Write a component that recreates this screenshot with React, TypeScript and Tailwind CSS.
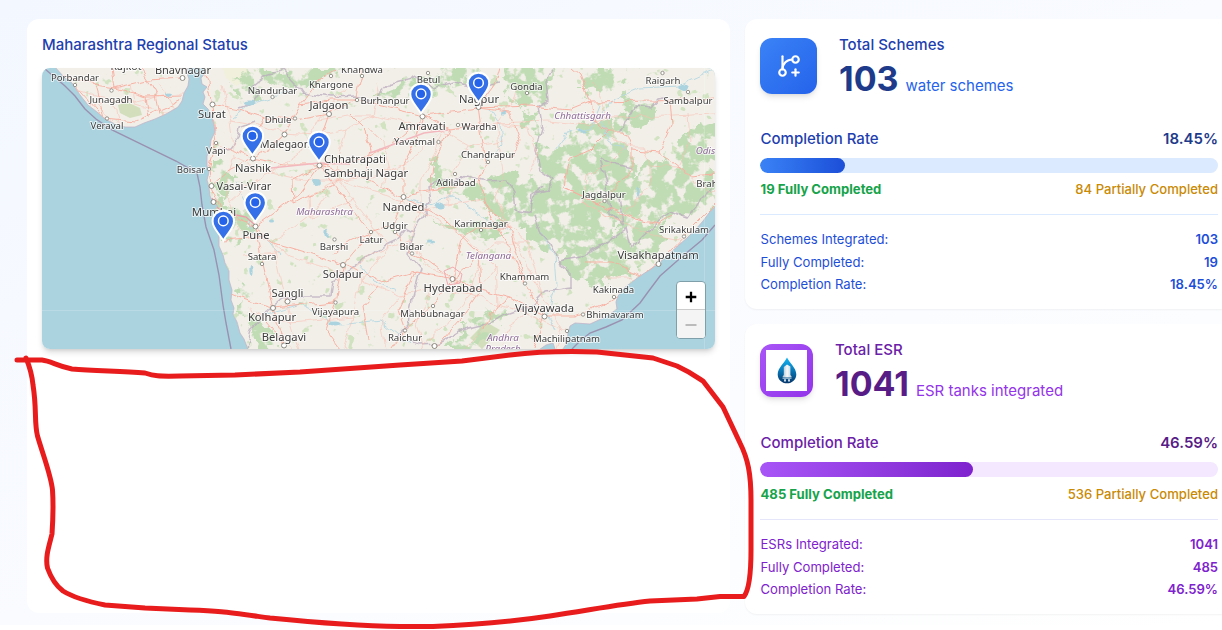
import { GitBranchPlus } from "lucide-react";

type Pt = [number, number];

const LAND =
  "M54 66L64 77L72 83L80 95L88 105L97 112L105 119L115 124L125 127L135 127L144 123L155 119L166 114L178 107L182 101L184 93L188 86L189 79L187 73L188 66Z" +
  "M203 66L206 72L201 78L202 84L207 87L203 92L205 97L203 104L208 109L212 116L214 125L215 132L211 140L210 149L207 156L207 166L209 172L207 180L209 188L210 196L213 202L218 206L214 210L216 222L219 233L219 246L223 255L225 263L229 271L229 280L232 290L231 300L234 308L233 314L237 322L240 333L244 339L249 352L536 352L546 345L553 343L556 352L561 352L567 343L568 333L570 326L575 323L590 324L601 319L610 314L617 309L616 302L618 296L624 288L640 276L651 269L658 264L670 253L680 244L687 238L696 229L703 221L709 213L718 203L718 66Z";

const FOREST = [
  "M500 66L554 66L551 92L543 110L531 102L520 108L508 95Z",
  "M524 112L541 118L538 132L525 128Z",
  "M536 142L556 150L571 134L590 122L612 120L620 140L630 158L640 190L622 214L600 250L590 262L570 258L560 240L545 220L525 215L500 222L482 200L480 185L500 172L525 176L542 172L536 155Z",
  "M616 112L629 120L628 155L618 150Z",
  "M580 80L594 70L628 68L626 82L600 92L580 94Z",
  "M624 92L650 102L658 118L640 128L625 115Z",
  "M676 148L690 130L718 122L718 200L696 216L672 214L650 235L630 246L618 240L620 210L640 170L662 158Z",
  "M482 182L545 186L560 222L572 246L552 255L535 246L520 228L500 218L486 204Z",
  "M560 262L590 240L620 234L652 232L670 238L650 262L620 276L596 284L575 278Z",
  "M448 344L464 330L474 314L492 311L505 306L500 325L486 338L470 349L446 349Z",
  "M232 78L256 74L260 98L240 104Z",
  "M256 72L300 68L345 68L305 92L280 92L262 82Z",
  "M372 99L392 90L410 78L440 68L478 68L470 82L438 90L420 94L400 102Z",
  "M430 158L444 168L456 184L478 182L490 192L480 200L456 194L440 190L430 178Z",
  "M214 160L230 168L234 182L224 202L214 196Z",
  "M210 200L234 206L256 216L250 236L238 246L228 244L222 228Z",
  "M240 280L250 288L252 316L270 326L280 349L262 349L250 330L238 306Z",
  "M432 218L460 228L500 222L510 234L490 238L450 234Z",
];

const ROADS = [
  "M60 75L95 85L115 88L148 80L183 78M95 85L104 118L135 121L182 100M115 88L112 68M115 88L145 97L182 96M148 80L140 68M145 97L148 117M104 118L75 85M148 80L156 95L160 115",
  "M204 70L212 105L216 143L209 169L211 187L222 214L255 227M212 105L240 110L266 118L295 120L329 114L356 100L424 116L478 108M216 143L232 150L253 158M211 187L230 170L253 158L280 140L284 134L300 105L320 80L335 68",
  "M255 227L263 264L273 308L284 345M255 227L272 242L315 255L343 265L383 281L415 272L453 279M343 265L335 302L326 330L340 349M453 279L433 305L405 330L392 349M453 279L480 290L510 298L544 316L575 316L612 301L658 264L685 235L715 205",
  "M319 165L335 185L371 232L343 265M319 165L298 195L273 214L255 227M319 165L370 180L403 197L445 220L478 252L480 290M253 158L285 165L319 165L355 162L390 146L424 116M329 114L320 140L319 165",
  "M478 108L481 130L486 162L478 182L486 204L510 230L525 283L544 316M478 108L530 106L570 110L590 102L655 101L715 98M590 102L595 122L608 132L625 132L632 150L632 170L600 205L564 188M478 108L495 85L500 68M478 108L510 112L520 140L510 160M590 102L580 75L572 68",
  "M424 116L450 130L485 125M403 197L430 190L465 184M403 197L392 225L371 232L350 242L333 255M403 197L403 165L417 138L424 116M350 113L365 128L371 150L365 170M266 118L255 135M300 105L330 100L356 100M356 100L362 76L360 68",
  "M415 272L398 310L405 330M383 281L363 305L369 340M225 240L248 238L266 236M230 294L245 300L273 308L335 302M262 318L284 345M410 252L428 260L453 279L470 265L478 252M410 252L392 225M453 279L462 240L478 228L512 228",
  "M480 290L460 320L434 349M510 298L490 312L484 330M525 283L510 250L486 204M564 188L568 160L590 150L608 132M564 188L600 205L635 220L658 225L672 215M632 150L660 152L690 176L715 174M660 152L672 126L670 98M544 316L538 335L534 349M640 276L612 262L585 262M293 202L308 196L335 185M293 202L292 180L319 165M430 190L434 160L450 130",
];

const BORDERS = [
  "M240 108L252 104L260 92L253 84L263 76L283 70L296 84L302 93L330 97L356 96L374 101L390 83L412 77L432 88L455 82L478 88L500 83",
  "M254 122L240 128L238 138L230 148L220 150",
  "M553 68L546 82L548 100L538 106L542 130L536 150L540 170L554 180L548 190L536 193L530 205",
  "M247 349L251 329L265 314L283 299L296 296L331 296L333 280L347 272L362 260L372 256L384 246L397 240L406 229L414 233L424 216L430 202L428 188L444 178L453 182L465 176L486 181L508 180L514 190L516 210",
  "M414 233L408 254L420 268L415 286L410 307L408 325L397 337L418 345L439 344L462 330L486 324L507 315L530 307L545 292L570 288L570 270L558 261L551 244L539 232L534 216",
  "M516 210L530 213L532 194L545 186M600 157L615 164L633 168M620 132L634 106L650 108L658 99L668 97M600 157L607 185L610 213L623 224L619 198M558 261L580 257L600 246L626 228L631 248L642 236L670 212L687 218L700 200L712 188L715 182",
];

const RIVERS = [
  "M290 90L270 98L250 105L232 118",
  "M490 110L500 125L502 145L486 160",
  "M600 105L590 130L568 132L555 150",
  "M540 232L554 255L556 285L547 312L556 332",
  "M400 196L428 206L452 196L470 208L510 232",
  "M262 316L300 305L340 325L380 320L410 345",
  "M625 150L610 140L600 118L615 98L640 88L680 86L715 70",
  "M235 180L248 205L250 232L266 238L280 255",
  "M360 265L372 280L395 290",
];

const LAKES: [number, number, number, number][] = [
  [249, 103, 5, 2.4], [316, 182, 4, 3], [253, 212, 2.4, 1.6], [272, 221, 3, 1.6], [335, 323, 5.6, 2.4],
  [440, 206, 5.6, 2.4], [431, 242, 3, 1.6], [505, 113, 3, 1.6], [582, 132, 4, 1.6], [683, 87, 5.6, 3],
  [638, 192, 1.6, 5.6], [167, 94, 3, 1.6], [251, 270, 1.6, 5], [327, 233, 1.6, 4],
];

type Label = [string, number, number, number];
const LABELS: Label[] = [
  ["Rajkot", 126, 70, 10.5], ["Bhavnagar", 183, 74, 11], ["Porbandar", 75, 81, 9.6],
  ["Junagadh", 111, 102.5, 9.6], ["Veraval", 107, 128.5, 9.6], ["Surat", 212, 118, 11.2],
  ["Vapi", 216, 153.5, 9.6], ["Boisar", 191, 172.5, 9.6], ["Nandurbar", 272.5, 94, 9.6],
  ["Dhule", 278, 122.5, 9.6], ["Malegaon", 285, 147.5, 10.8], ["Khandwa", 362, 73, 9.6],
  ["Khargone", 331, 87.5, 9.6], ["Jalgaon", 329, 109, 11.2], ["Burhanpur", 385, 103.5, 9.6],
  ["Betul", 428.5, 83, 9.6], ["Nagpur", 479, 102.5, 11.2], ["Gondia", 526.5, 89.5, 9.6],
  ["Raigarh", 663, 84, 9.6], ["Sambalpur", 688, 103.5, 9.6], ["Amravati", 422, 130, 11.2],
  ["Wardha", 479, 129.5, 9.6], ["Yavatmal", 414.5, 145, 9.6], ["Chandrapur", 488, 158, 9.6],
  ["Nashik", 253, 171.5, 11.2], ["Chhatrapati", 355, 162.5, 11.2], ["Sambhaji Nagar", 366, 177, 11.2],
  ["Adilabad", 456, 185.5, 9.6], ["Jagdalpur", 604, 197.5, 9.6], ["Brahmapur", 722, 187, 9.6],
  ["Vasai-Virar", 244, 189.5, 11], ["Mumbai", 214, 216, 11.4], ["Pune", 256, 239, 11.2],
  ["Satara", 262, 260, 9.6], ["Nanded", 403.5, 210.5, 11.2], ["Udgir", 395, 228.5, 9.6],
  ["Karimnagar", 481, 226.5, 9.6], ["Latur", 371.5, 242.5, 9.6], ["Barshi", 334, 250, 9.6],
  ["Bidar", 411.5, 250, 9.6], ["Solapur", 343, 278, 11.2], ["Hyderabad", 453, 292, 11.4],
  ["Khammam", 524.5, 280, 9.6], ["Sangli", 287.5, 296.5, 11.2], ["Kolhapur", 272, 321, 11.2],
  ["Vijayapura", 335.5, 315, 9.6], ["Mahbubnagar", 432.5, 317, 9.6], ["Belagavi", 284, 341, 11.2],
  ["Raichur", 405, 341, 9.6], ["Machilipatnam", 566.5, 342, 9.6], ["Vijayawada", 544.5, 311.5, 11.2],
  ["Bhimavaram", 615, 318, 9.6], ["Kakinada", 613.5, 293, 9.6], ["Visakhapatnam", 658, 259, 11.2],
  ["Srikakulam", 684, 233, 9.6],
];

const REGIONS: Label[] = [
  ["Maharashtra", 324.5, 215, 9.8], ["Chhattisgarh", 582.5, 118.5, 9.8], ["Odisha", 711, 153.5, 9.8],
  ["Telangana", 488.5, 258.5, 9.8], ["Andhra", 503, 341, 9.8], ["Pradesh", 503, 352, 9.8],
];

const TOWNS: Pt[] = [
  [75, 85], [111.5, 90.5], [107, 118.5], [216, 143], [209, 169], [272.5, 97], [295, 118.5], [331, 76],
  [362, 76], [357, 100], [428, 73], [527, 93], [662.5, 73], [688, 92], [458, 125], [438.5, 142],
  [488, 162], [455, 174], [604.5, 201], [262, 264], [395, 232], [371, 232], [334.5, 239.5], [481, 230],
  [412, 253.5], [525, 283.5], [335.5, 302.5], [433, 306], [405, 330.5], [567, 331], [583, 314.5],
  [614, 297], [684, 236.5],
];

const CITIES: Pt[] = [
  [182.5, 78], [212.5, 104.5], [329, 114], [422.5, 116.5], [478.5, 107], [284.5, 134.5], [253, 158.5],
  [319.5, 165.5], [403.5, 197], [211.5, 186], [213.5, 202], [255.5, 226.5], [343, 265], [452.5, 279],
  [273, 308], [287.5, 301.5], [284, 345.5], [544.5, 316.5], [658.5, 264], [434.5, 346],
];

const PINS: Pt[] = [
  [478.5, 72.5], [421, 83.5], [252.4, 125.5], [319, 131.5], [255.2, 192], [223.3, 210.5],
];

function RegionMap() {
  return (
    <svg viewBox="42 68 673 281" className="block h-full w-full font-['Noto_Sans',sans-serif]">
      <defs>
        <clipPath id="land"><path d={LAND} /></clipPath>
        <filter id="patches" x="0" y="0" width="100%" height="100%">
          <feTurbulence type="fractalNoise" baseFrequency="0.075" numOctaves="4" seed="8" result="n" />
          <feColorMatrix in="n" type="matrix" values="0 0 0 0 0  0 0 0 0 0  0 0 0 0 0  9 0 0 0 -3.5" result="m" />
          <feDisplacementMap in="SourceGraphic" in2="n" scale="22" xChannelSelector="G" yChannelSelector="B" result="d" />
          <feComposite in="d" in2="m" operator="in" />
        </filter>
        <filter id="scatter" x="0" y="0" width="100%" height="100%">
          <feTurbulence type="fractalNoise" baseFrequency="0.09" numOctaves="3" seed="21" result="n" />
          <feColorMatrix in="n" type="matrix" values="0 0 0 0 0  0 0 0 0 0  0 0 0 0 0  14 0 0 0 -9.6" result="m" />
          <feComposite in="SourceGraphic" in2="m" operator="in" />
        </filter>
        <filter id="wobble" x="0" y="0" width="100%" height="100%">
          <feTurbulence type="fractalNoise" baseFrequency="0.08" numOctaves="2" seed="5" result="n" />
          <feDisplacementMap in="SourceGraphic" in2="n" scale="8" xChannelSelector="R" yChannelSelector="G" />
        </filter>
      </defs>
      <rect x="41" y="67" width="675" height="283" fill="#aad3df" />
      <path d={LAND} fill="#f2efe9" stroke="#c3b5c8" strokeWidth="0.8" />
      <g clipPath="url(#land)">
        <g filter="url(#scatter)" opacity="0.8">
          <rect x="42" y="68" width="673" height="281" fill="#c8e0b6" />
        </g>
        <path d="M118 105L127 102L140 108L142 115L130 118L120 113Z" fill="#d3dfbc" />
        <path d="M222 66L246 66L248 80L236 86L226 78Z" fill="#f0f0dc" />
        <path d="M470 338L486 322L500 330L482 349Z" fill="#d3dfbc" />
        <g filter="url(#patches)" fill="#c0dcb4">
          <rect x="42" y="68" width="1" height="1" opacity="0" />
          <rect x="714" y="348" width="1" height="1" opacity="0" />
          {FOREST.map((d) => <path key={d} d={d} />)}
        </g>
        <g filter="url(#wobble)" fill="none">
          {RIVERS.map((d) => <path key={d} d={d} stroke="#b4d8e2" strokeWidth="0.9" />)}
          {BORDERS.map((d) => <path key={d} d={d} stroke="#baabbd" strokeWidth="1.5" strokeOpacity="0.75" />)}
          {ROADS.map((d) => <path key={d} d={d} stroke="#f8ae9f" strokeWidth="1" strokeOpacity="0.95" />)}
          {ROADS.map((d) => (
            <path key={d} d={d} transform="translate(18 15)" stroke="#f9bcae" strokeWidth="0.8" strokeOpacity="0.7" />
          ))}
          {LAKES.map(([x, y, rx, ry]) => (
            <ellipse key={`${x}-${y}`} cx={x} cy={y} rx={rx} ry={ry} fill="#aad3df" />
          ))}
        </g>
        <path d="M271 168L319 163L350 164M370 153L424 133L448 130" fill="none" stroke="#f2b8bd" strokeWidth="1.7" />
        <path d="M444 271L453 267L462 274L460 283L448 285Z" fill="none" stroke="#f0a9b0" />
        <path d="M212 198L218 208L226 213M222 212L246 217L255 225" fill="none" stroke="#ee9aa8" strokeWidth="1.3" />
      </g>
      <path
        d="M45 69L65 86L75 96L85 109L96 119L112 130L176 161L197 173L200 187L202 205L206 227L214 250L219 275L223 305L226 323L231 349M715 225L702 240L690 250L677 261L660 276L648 292L640 303L622 320L606 327L590 333L581 340L572 349"
        fill="none"
        stroke="#9a91b0"
        strokeWidth="1.4"
      />
      <path d="M42 310.5H715M704.5 68V349" stroke="#fff" strokeOpacity="0.28" strokeWidth="0.7" />
      {TOWNS.map(([x, y]) => (
        <circle key={`${x}-${y}`} cx={x} cy={y} r="1.7" fill="#fff" stroke="#8b8980" strokeWidth="0.9" />
      ))}
      {CITIES.map(([x, y]) => (
        <circle key={`${x}-${y}`} cx={x} cy={y} r="2.5" fill="#fff" stroke="#8b8980" strokeWidth="1" />
      ))}
      <g textAnchor="middle" stroke="#fff" strokeOpacity="0.7" strokeWidth="2" strokeLinejoin="round" paintOrder="stroke">
        {REGIONS.map(([t, x, y, s]) => (
          <text key={t} x={x} y={y} fontSize={s} fill="#8d6a98" fontStyle="italic">{t}</text>
        ))}
        {LABELS.map(([t, x, y, s]) => (
          <text key={t} x={x} y={y} fontSize={s} fill="#3c3c3c">{t}</text>
        ))}
      </g>
      {PINS.map(([x, y]) => (
        <g key={`${x}-${y}`} transform={`translate(${x} ${y})`}>
          <path
            d="M0 0.3C-6 0.3 -10.7 4.8 -10.7 10.7C-10.7 17.5 -5.5 21 0 30C5.5 21 10.7 17.5 10.7 10.7C10.7 4.8 6 0.3 0 0.3Z"
            fill="#3670e8"
            stroke="#fff"
            strokeWidth="2"
          />
          <circle cy="10.4" r="4.8" fill="#2563eb" stroke="#fff" strokeWidth="1.5" />
        </g>
      ))}
    </svg>
  );
}

function DropLogo() {
  return (
    <svg viewBox="0 0 20 27" className="h-[27px] w-[20px]">
      <defs>
        <linearGradient id="drop" x1="0" y1="0" x2="0" y2="1">
          <stop offset="0" stopColor="#12b5f5" />
          <stop offset="0.5" stopColor="#0879b8" />
          <stop offset="1" stopColor="#06366b" />
        </linearGradient>
        <linearGradient id="tank" x1="0" y1="0" x2="1" y2="0">
          <stop offset="0" stopColor="#a9bfcc" />
          <stop offset="0.5" stopColor="#f4f8fa" />
          <stop offset="1" stopColor="#c4d3dc" />
        </linearGradient>
      </defs>
      <path d="M10 0.5C8 5 0.7 11 0.7 17.2C0.7 22.5 4.8 26.3 10 26.3S19.3 22.5 19.3 17.2C19.3 11 12 5 10 0.5Z" fill="url(#drop)" />
      <path d="M6.8 10L10 7.5L13.4 9.5V18L14.6 19.5V20.6H5.6V19.5L6.8 18Z" fill="url(#tank)" />
      <path d="M7 22.2H9V24.5H7ZM11 22.2H13V24.5H11Z" fill="#c8d9e5" />
      <path d="M5.5 21.5H14.5" stroke="#e8f0f5" strokeWidth="0.6" />
    </svg>
  );
}

const THEMES = {
  blue: {
    title: "text-[#1e40af]", value: "text-[#1e3a8a]", unit: "text-[#2563eb]", track: "bg-[#dbeafe]",
    fill: "from-[#3b82f6] to-[#1d4ed8]", line: "border-[#dbeafe]", detail: "text-[#1d4ed8]",
    header: "h-[94px]", legend: "mt-[7px]",
  },
  purple: {
    title: "text-[#6b21a8]", value: "text-[#581c87]", unit: "text-[#9333ea]", track: "bg-[#f3e8ff]",
    fill: "from-[#a855f7] to-[#7e22ce]", line: "border-[#e6e6fa]", detail: "text-[#7e22ce]",
    header: "h-[93px]", legend: "mt-2",
  },
};

interface StatCardProps {
  theme: keyof typeof THEMES;
  icon: React.ReactNode;
  title: string;
  value: string;
  unit: string;
  rate: number;
  full: number;
  partial: number;
  noun: string;
}

function StatCard({ theme, icon, title, value, unit, rate, full, partial, noun }: StatCardProps) {
  const t = THEMES[theme];
  const rows = [
    [`${noun} Integrated:`, value],
    ["Fully Completed:", String(full)],
    ["Completion Rate:", `${rate}%`],
  ];
  return (
    <section className="h-[290px] w-[488px] shrink-0 rounded-xl bg-white px-[15px] pt-[15px] shadow-[0_1px_2px_rgba(0,0,0,0.05)]">
      <div className={`flex items-start ${t.header}`}>
        {icon}
        <div>
          <div className={`text-[15px] leading-[22px] font-medium ${t.title}`}>{title}</div>
          <div className="mt-1 flex items-baseline leading-[38px]">
            <span className={`text-[34px] font-bold ${t.value}`}>{value}</span>
            <span className={`ml-[7px] text-[15px] ${t.unit}`}>{unit}</span>
          </div>
        </div>
      </div>
      <div className="flex h-[22px] items-center justify-between text-[15px]">
        <span className={`pl-[0.5px] font-medium ${t.title}`}>Completion Rate</span>
        <span className={`font-semibold ${t.value}`}>{rate}%</span>
      </div>
      <div className={`mt-2 h-[15px] overflow-hidden rounded-full ${t.track}`}>
        <div className={`h-full rounded-full bg-gradient-to-r ${t.fill}`} style={{ width: `${rate}%` }} />
      </div>
      <div className={`flex h-5 items-center justify-between text-[13.1px] ${t.legend}`}>
        <span className="pl-[0.5px] font-bold text-[#16a34a]">{full} Fully Completed</span>
        <span className="font-medium text-[#ca8a04]">{partial} Partially Completed</span>
      </div>
      <div className={`mt-[14px] border-t pt-[14px] text-[13.1px] ${t.line} ${t.detail}`}>
        {rows.map(([k, v]) => (
          <div key={k} className="flex h-[22.4px] items-center justify-between">
            <span className="pl-[0.5px]">{k}</span>
            <span className="font-semibold">{v}</span>
          </div>
        ))}
      </div>
    </section>
  );
}

export default function App() {
  return (
    <div className="relative h-[630px] w-[1222px] overflow-hidden bg-white font-['Inter',sans-serif]">
      <main className="flex h-[625px] gap-[15px] bg-gradient-to-br from-[#f3f7ff] to-white pt-[19px] pl-[27px]">
        <section className="h-[594px] w-[703px] shrink-0 rounded-xl bg-white px-[15px] pt-[15px]">
          <h2 className="text-[15px] leading-[22px] font-medium text-[#1e40af]">Maharashtra Regional Status</h2>
          <div className="relative mt-3 h-[281px] w-[673px] rounded-lg shadow-[0_4px_6px_-1px_rgba(0,0,0,0.15),0_2px_4px_-2px_rgba(0,0,0,0.12)]">
            <div className="h-full overflow-hidden rounded-lg">
              <RegionMap />
            </div>
            <div className="absolute right-[9px] bottom-[10px] flex w-[30px] flex-col overflow-hidden rounded-[4px] border border-[#7fa0ab] bg-white">
              <button className="flex h-7 items-center justify-center border-b border-[#ccc] pt-[3px]" aria-label="Zoom in">
                <svg viewBox="0 0 12 12" className="size-3"><path d="M6 0.7V11.3M0.7 6H11.3" stroke="#000" strokeWidth="2.3" /></svg>
              </button>
              <button className="flex h-7 items-center justify-center bg-[#f4f4f4] pt-[2px]" aria-label="Zoom out">
                <svg viewBox="0 0 12 12" className="size-3"><path d="M0.5 6H11.5" stroke="#bbb" strokeWidth="2" /></svg>
              </button>
            </div>
          </div>
        </section>
        <div className="flex flex-col gap-[15px]">
          <StatCard
            theme="blue"
            icon={
              <div className="mt-1 mr-[22px] flex h-14 w-[57px] items-center justify-center rounded-xl bg-gradient-to-br from-[#3b82f6] to-[#2563eb] text-white shadow-md">
                <GitBranchPlus size={26} strokeWidth={2} />
              </div>
            }
            title="Total Schemes"
            value="103"
            unit="water schemes"
            rate={18.45}
            full={19}
            partial={84}
            noun="Schemes"
          />
          <StatCard
            theme="purple"
            icon={
              <div className="mt-[5px] mr-[22px] size-[53px] rounded-xl bg-gradient-to-br from-[#a855f7] to-[#9333ea] p-[6px] shadow-md">
                <div className="flex size-[41px] items-center justify-center bg-white">
                  <DropLogo />
                </div>
              </div>
            }
            title="Total ESR"
            value="1041"
            unit="ESR tanks integrated"
            rate={46.59}
            full={485}
            partial={536}
            noun="ESRs"
          />
        </div>
      </main>
      <svg viewBox="0 0 1222 630" className="pointer-events-none absolute inset-0 h-full w-full">
        <path
          d="M17 360H42C51 361 57 366 72 369C95 371 120 371 145 373C154 376 158 376.5 180 376L235 375L300 372L400 365L462 361L510 355C535 352 570 351 597 352L653 358L677 366C690 372 697 377 703 381L723 407L740 443C748 459 751 474 751 500V550C751 572 749 590 744 596.5H720L697 599L650 601C620 604 590 610 550 616C510 622 470 625 433 626.5H400C360 626 310 622 270 618C225 612 220 611 190 610L145 608L105 605C85 601 71 596 63 591C55 585 50 575 47.5 568C45 557 49 546 52 534C53 519 53.5 505 52.5 490C51 475 43 455 37.5 436C34 422 37 410 33 385C32 375 29 365 26 358"
          fill="none"
          stroke="#e81c1c"
          strokeWidth="5"
          strokeLinecap="round"
          strokeLinejoin="round"
        />
      </svg>
    </div>
  );
}
